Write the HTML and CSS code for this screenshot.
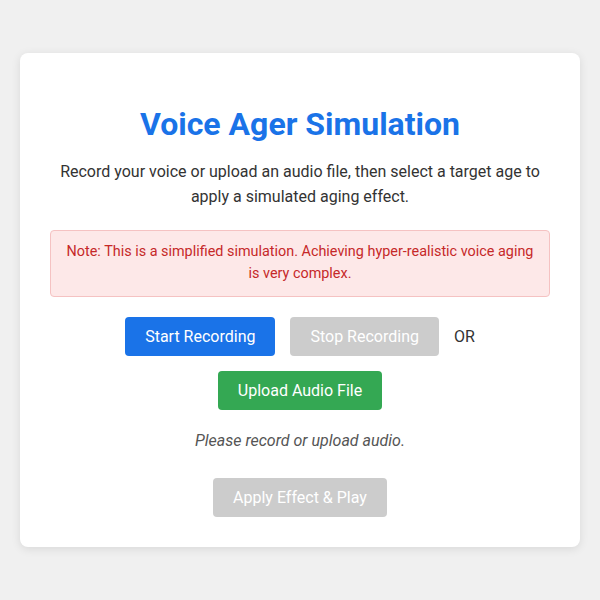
FILE: index.html
```html
<!DOCTYPE html>
<html lang="en">
<head>
    <meta charset="UTF-8">
    <meta name="viewport" content="width=device-width, initial-scale=1.0">
    <title>Voice Ager Simulation</title>
    <link rel="stylesheet" href="styles.css">
</head>
<body>
    <div class="container">
        <h1>Voice Ager Simulation</h1>
        <p class="intro">Record your voice or upload an audio file, then select a target age to apply a simulated aging effect.</p>

        <div class="note">Note: This is a simplified simulation. Achieving hyper-realistic voice aging is very complex.</div>

        <!-- Input controls -->
        <div class="controls">
            <button class="btn btn-blue" id="start-btn">Start Recording</button>
            <button class="btn btn-gray" id="stop-btn" disabled>Stop Recording</button>
            <span class="or">OR</span>
            <label class="btn btn-green" for="file-input">Upload Audio File</label>
            <input type="file" id="file-input" accept="audio/*">
        </div>

        <p class="status" id="status">Please record or upload audio.</p>

        <div class="actions">
            <button class="btn btn-gray" id="apply-btn" disabled>Apply Effect &amp; Play</button>
        </div>
    </div>
</body>
</html>
```

FILE: styles.css
```css
body {
    margin: 0;
    padding: 0;
    font-family: Roboto, "Liberation Sans", Arial, sans-serif;
    background-color: #f0f0f0;
    color: #333;
    display: flex;
    justify-content: center;
    align-items: center;
    min-height: 100vh;
}
.container {
    background: #fff;
    padding: 30px;
    max-width: 500px;
    width: 100%;
    border-radius: 8px;
    box-shadow: 0 2px 10px rgba(0, 0, 0, 0.1);
    text-align: center;
}
.container h1 {
    color: #1a73e8;
    font-size: 32px;
    margin: 22px 0 16px;
}
.intro {
    font-size: 16px;
    line-height: 25px;
    margin: 0 0 21px;
}
.note {
    background-color: #fde8e8;
    border: 1px solid #f5c2c2;
    color: #c62828;
    border-radius: 4px;
    padding: 10px;
    font-size: 14.4px;
    line-height: 22.5px;
    margin-bottom: 20px;
}
.controls {
    display: flex;
    flex-wrap: wrap;
    justify-content: center;
    align-items: center;
    gap: 15px;
}
.controls input[type="file"] {
    display: none;
}
.or {
    font-size: 16px;
}
.btn {
    display: inline-block;
    font-family: inherit;
    font-size: 16px;
    line-height: 19px;
    padding: 10px 20px;
    border: none;
    border-radius: 4px;
    color: #fff;
    cursor: pointer;
}
.btn-blue {
    background-color: #1a73e8;
}
.btn-green {
    background-color: #34a853;
}
.btn-gray {
    background-color: #ccc;
    cursor: not-allowed;
}
.status {
    font-style: italic;
    color: #555;
    font-size: 16px;
    line-height: 1.6;
    margin: 18px 0 25px;
}
.actions {
    margin: 0;
}
```
